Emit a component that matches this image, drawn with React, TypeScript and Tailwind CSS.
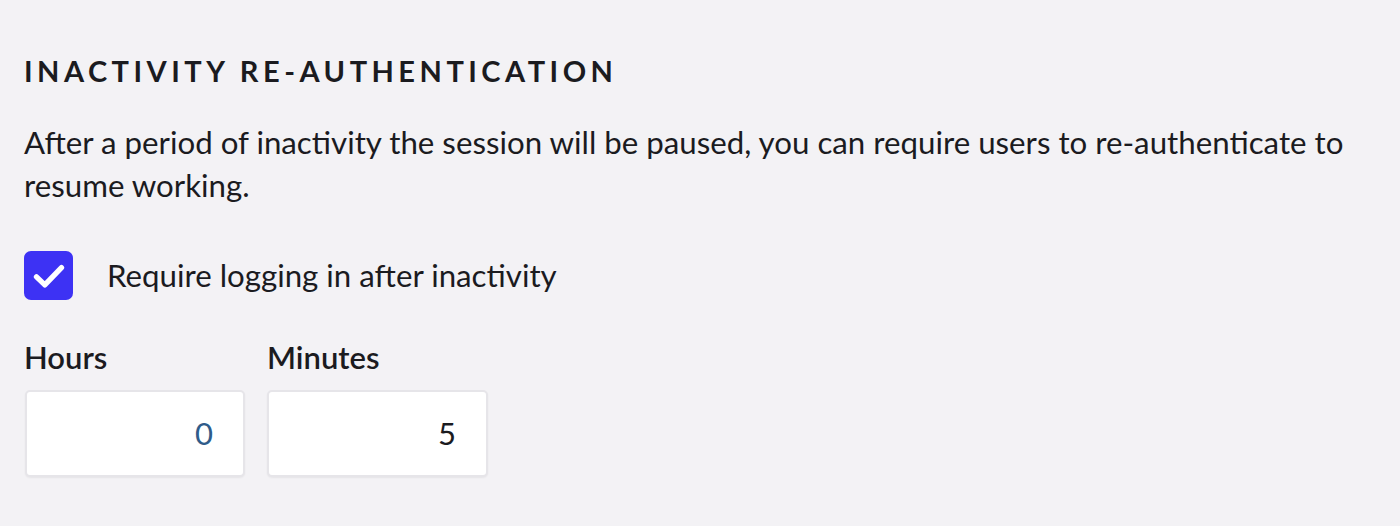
export default function App() {
  return (
    <div className="min-h-[526px] w-full bg-[#f3f2f5] px-6 pt-[51px] font-['Lato',sans-serif] text-[#1b1b1f]">
      <h2 className="text-[29px] leading-[40px] font-bold uppercase tracking-[0.155em]">Inactivity Re-authentication</h2>
      <p className="mt-[30px] text-[31.25px] leading-[43px]">
        After a period of inactivity the session will be paused, you can require users to re-authenticate to
        <br />
        resume working.
      </p>

      <label className="mt-[44px] flex items-center gap-[34px]">
        <span className="flex h-[49px] w-[49px] items-center justify-center rounded-[7px] bg-[#3d32f4]">
          <svg width="40" height="40" viewBox="0 0 24 24" fill="none">
            <path d="M4.5 12.5l5 4.8L19.5 7" stroke="white" strokeWidth="3.2" strokeLinecap="round" strokeLinejoin="round" />
          </svg>
        </span>
        <span className="text-[31.25px] leading-[43px]">Require logging in after inactivity</span>
      </label>

      <div className="mt-[39px] flex gap-[22px]">
        <div className="flex flex-col">
          <span className="text-[31px] leading-[36px] font-semibold">Hours</span>
          <div className="mt-[15px] ml-px flex h-[87px] w-[220px] items-center justify-end rounded-[5px] border-2 border-[#e6e5e9] bg-white pr-[30px] text-[31px] text-[#2f5c8a] shadow-[0_1px_2px_rgba(0,0,0,0.06)]">
            0
          </div>
        </div>
        <div className="flex flex-col">
          <span className="text-[31px] leading-[36px] font-semibold">Minutes</span>
          <div className="mt-[15px] flex h-[87px] w-[221px] items-center justify-end rounded-[5px] border-2 border-[#e6e5e9] bg-white pr-[30px] text-[31px] text-[#1b1b1f] shadow-[0_1px_2px_rgba(0,0,0,0.06)]">
            5
          </div>
        </div>
      </div>
    </div>
  );
}
